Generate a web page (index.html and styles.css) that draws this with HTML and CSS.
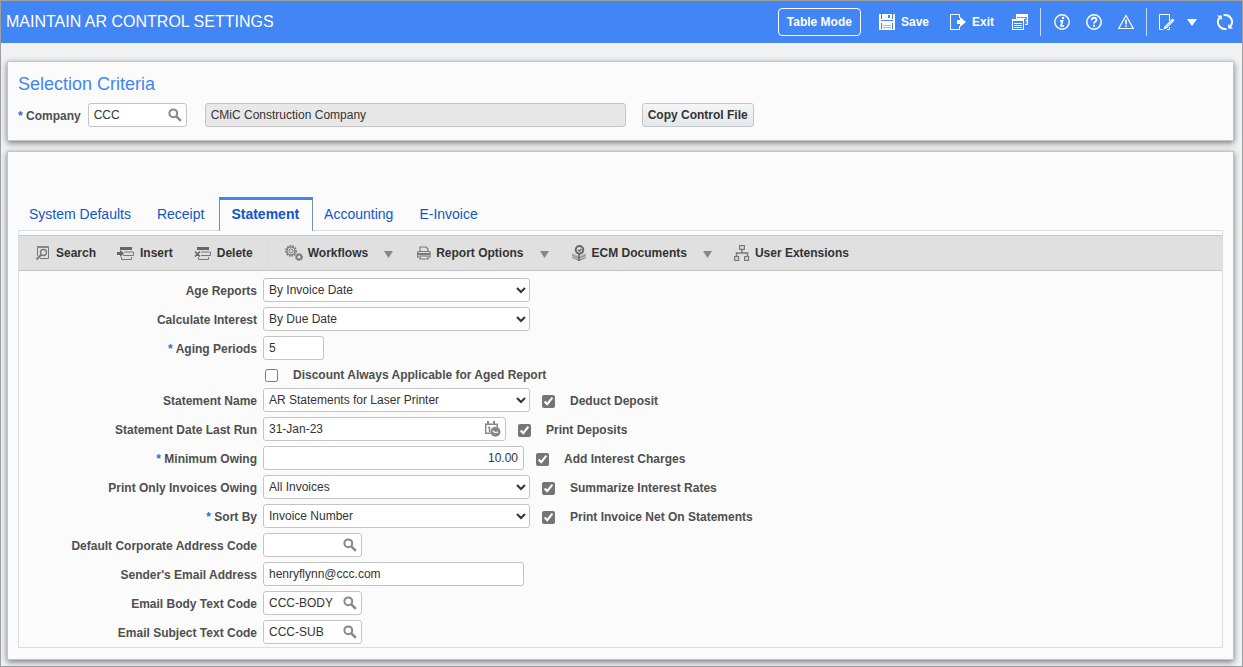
FILE: index.html
```html
<!DOCTYPE html>
<html lang="en">
<head>
<meta charset="utf-8">
<title>Maintain AR Control Settings</title>
<link rel="stylesheet" href="styles.css">
</head>
<body>
<svg class="defs" width="0" height="0" aria-hidden="true">
  <symbol id="lens" viewBox="0 0 14 14"><circle cx="5.3" cy="5.3" r="3.9" fill="none" stroke="#85898c" stroke-width="2"/><path d="M8.400 8.400 12.800 12.800" stroke="#85898c" stroke-width="2.600"/></symbol>
  <symbol id="down" viewBox="0 0 10 7"><path d="M0 0H10L5 7Z" fill="currentColor"/></symbol>
</svg>
<div class="app">
  <header class="topbar">
    <h1 class="title">MAINTAIN AR CONTROL SETTINGS</h1>
    <button class="mode">Table Mode</button>
    <button class="action save"><svg width="16" height="16" viewBox="0 0 16 16"><path fill="#fff" d="M0 0h16v16H0z"/><path fill="#4285f4" d="M2 0h1v5H2zM13 0h1v5h-1zM9 1h2v3H9zM2 6h12v1H2zM2 9h12v6H2z"/><path fill="#fff" d="M3 9h10v6H3z"/><path fill="#8db5fa" d="M4 11h8v1H4zM4 13h8v1H4z"/></svg>Save</button>
    <button class="action exit"><svg width="16" height="16" viewBox="0 0 16 16"><path d="M9.500 4V.5H.5v15h9V12" fill="none" stroke="#fff"/><path fill="#fff" d="M7 6h3V3l6 5-6 5v-3H7z"/></svg>Exit</button>
    <button class="action forms" aria-label="Forms"><svg width="16" height="16" viewBox="0 0 16 16"><path d="M4 0h12v11h-3V5H4z" fill="#fff"/><path d="M5 3h10v7h-2V4H5z" fill="#6fa2f7"/><path d="M0 5h12v11H0z" fill="#fff"/><path d="M1 7h10v8H1z" fill="#4285f4"/><path d="M2 9.500h8M2 11.500h8M2 13.500h8M14 6.500h1" stroke="#fff"/></svg></button>
    <span class="rule"></span>
    <button class="action info" aria-label="Information"><svg width="16" height="16" viewBox="0 0 16 16"><circle cx="8" cy="8" r="7.200" fill="none" stroke="#fff" stroke-width="1.400"/><circle cx="9" cy="4" r="1.300" fill="#fff"/><path d="M6 6.800h2.500L7 11.800h3" fill="none" stroke="#fff" stroke-width="1.700"/></svg></button>
    <button class="action" aria-label="Help"><svg width="16" height="16" viewBox="0 0 16 16"><circle cx="8" cy="8" r="7.200" fill="none" stroke="#fff" stroke-width="1.500"/><path d="M5.600 6.200C5.700 2.900 10.500 3 10.400 6 10.300 7.700 8 7.600 8 9.600" fill="none" stroke="#fff" stroke-width="1.800"/><path d="M7 10.800h2v2H7z" fill="#fff"/></svg></button>
    <button class="action" aria-label="Warnings"><svg width="16" height="16" viewBox="0 0 16 16"><path d="M8 1.500 15.300 14.500H.7Z" fill="none" stroke="#fff" stroke-width="1.200"/><path d="M8 5.500V10.500M8 11.500V13" stroke="#fff" stroke-width="1.600"/></svg></button>
    <span class="rule"></span>
    <button class="action edit" aria-label="Edit page"><svg width="16" height="16" viewBox="0 0 16 16"><path d="M10.500 7V.5H.5v15H4M10.500 13v2.500H8" fill="none" stroke="#fff"/><path d="M4.500 15.500 5.500 12.500 13.500 4.500l2 2-8 8z" fill="#fff"/><path d="M7 13 13 7.300" stroke="#4285f4" stroke-width=".5"/></svg></button>
    <button class="action more" aria-label="More"><svg width="10" height="7"><use href="#down"/></svg></button>
    <button class="action refresh" aria-label="Refresh"><svg width="16" height="16" viewBox="0 0 16 16"><path d="M6.500 1.200A6.900 6.900 0 0 1 13.500 12.200M9.500 14.800A6.900 6.900 0 0 1 2.500 3.800" fill="none" stroke="#fff" stroke-width="1.900"/><path d="M0 1.500h4.800V6zM16 14.500h-4.800V10z" fill="#fff"/></svg></button>
  </header>

  <main class="content">
    <section class="panel criteria">
      <h2 class="heading">Selection Criteria</h2>
      <div class="criteria-row">
        <label class="label company" for="company"><span class="star">*</span> Company</label>
        <div class="box lookup"><input id="company" value="CCC"><button aria-label="Find company"><svg width="14" height="14"><use href="#lens"/></svg></button></div>
        <input class="box company-name" aria-label="Company name" value="CMiC Construction Company" readonly>
        <button class="copy">Copy Control File</button>
      </div>
    </section>

    <section class="panel settings">
      <nav class="tabs">
        <a class="tab" href="#defaults">System Defaults</a>
        <a class="tab" href="#receipt">Receipt</a>
        <a class="tab current" href="#statement">Statement</a>
        <a class="tab" href="#accounting">Accounting</a>
        <a class="tab" href="#einvoice">E-Invoice</a>
      </nav>
      <div class="sheet">
        <div class="toolbar">
          <div class="group">
            <button class="tool"><svg width="18" height="16" viewBox="0 0 18 16"><g fill="none" stroke="#77797a"><path d="M4.500 11V1.500h11v12H7"/><path d="M4 2h12" stroke-width="2" stroke="#888"/><circle cx="10.500" cy="7.500" r="3" stroke-width="1.400"/><path d="M8.500 9.500 3.500 14.500" stroke-width="2"/></g></svg>Search</button>
            <button class="tool"><svg width="18" height="16" viewBox="0 0 18 16"><path d="M3 2h12v3H3zM0 7h3V5l4 3.500L3 12v-2H0z" fill="#666"/><path d="M7 7h9.500v3.500H6M4.500 12v2.500h10V12" fill="none" stroke="#77797a"/></svg>Insert</button>
            <button class="tool"><svg width="18" height="16" viewBox="0 0 18 16"><path d="M3 2h12v3H3z" fill="#666"/><path d="M1 6.500 6 11.500M6 6.500 1 11.500" stroke="#666" stroke-width="1.500"/><path d="M7 7h9.500v3.500H7M4.500 12v2.500h10V12" fill="none" stroke="#77797a"/></svg>Delete</button>
          </div>
          <span class="divider"></span>
          <div class="group menus">
            <button class="tool"><svg width="18" height="16" viewBox="0 0 18 16"><g fill="none" stroke="#77797a"><circle cx="6" cy="6" r="5" stroke-width="1.800" stroke-dasharray="1.700 1"/><circle cx="6" cy="6" r="4"/><circle cx="6" cy="6" r="2"/><circle cx="14" cy="12" r="3.300" stroke-width="1.400" stroke-dasharray="1.300 .8"/><circle cx="14" cy="12" r="2.300" stroke-width="1.500"/></g></svg>Workflows<svg class="arrow" width="9" height="7" viewBox="0 0 9 7"><path d="M0 0H9L4.500 7Z" fill="currentColor"/></svg></button>
            <button class="tool"><svg width="18" height="16" viewBox="0 0 18 16"><g fill="none" stroke="#77797a" stroke-width="1.200"><path d="M7 6V2h6l2 2v2M6 12H4.600V7.500q0-1 1-1h10.500q1 0 1 1V12H16M7 11h8v3H7z"/><path d="M5 9h12" stroke-width="2"/></g></svg>Report Options<svg class="arrow" width="9" height="7" viewBox="0 0 9 7"><path d="M0 0H9L4.500 7Z" fill="currentColor"/></svg></button>
            <button class="tool"><svg width="18" height="16" viewBox="0 0 18 16"><path d="M3 8 10 11 17 8v4l-7 4-7-4z" fill="#bbb"/><path d="M3 10 10 13 17 10M3 12.500l7 3 7-3" fill="none" stroke="#8a8c8d"/><circle cx="10.500" cy="4.800" r="3.800" fill="#ddd" stroke="#666" stroke-width="2"/><path d="M9 5l1.500 1 2-2M10 9v7" fill="none" stroke="#666" stroke-width="1.500"/></svg>ECM Documents<svg class="arrow" width="9" height="7" viewBox="0 0 9 7"><path d="M0 0H9L4.500 7Z" fill="currentColor"/></svg></button>
            <button class="tool"><svg width="18" height="16" viewBox="0 0 18 16"><g fill="none" stroke="#77797a" stroke-width="1.200"><path d="M7.600.6h4.800v3.800H7.600zM2.600 11.600h4v3.800h-4zM12.600 11.600h4v3.800h-4z"/><path d="M10 4.500v3.500M4.500 11V8h11v3" stroke-width="1.500"/></g></svg>User Extensions</button>
          </div>
        </div>

        <form class="form">
          <div class="row"><label class="label" for="age">Age Reports</label><select class="box wide" id="age"><option>By Invoice Date</option></select></div>
          <div class="row"><label class="label" for="interest">Calculate Interest</label><select class="box wide" id="interest"><option>By Due Date</option></select></div>
          <div class="row"><label class="label" for="periods"><span class="star">*</span> Aging Periods</label><input class="box short" id="periods" value="5"></div>
          <div class="row tick-row"><label class="tick"><input type="checkbox">Discount Always Applicable for Aged Report</label></div>
          <div class="row"><label class="label" for="name">Statement Name</label><select class="box wide" id="name"><option>AR Statements for Laser Printer</option></select><label class="tick"><input type="checkbox" checked>Deduct Deposit</label></div>
          <div class="row"><label class="label" for="date">Statement Date Last Run</label><div class="box date"><input id="date" value="31-Jan-23"><button type="button" aria-label="Pick date"><svg width="17" height="16" viewBox="0 0 17 16"><path d="M1.700 3v9.300h5M1 3.200h12.300V6" fill="none" stroke="#85898c" stroke-width="1.500"/><path d="M3 0h2v4H3zM9 0h2v4H9z" fill="#85898c"/><path d="M4 6.500h1.500V11" fill="none" stroke="#85898c" stroke-width="1.500"/><circle cx="11.500" cy="10.700" r="5" fill="#85898c"/><path d="M8.700 10l2.500 1.500 3-.5" fill="none" stroke="#fff" stroke-width="1.200"/></svg></button></div><label class="tick"><input type="checkbox" checked>Print Deposits</label></div>
          <div class="row"><label class="label" for="minimum"><span class="star">*</span> Minimum Owing</label><input class="box medium amount" id="minimum" value="10.00"><label class="tick"><input type="checkbox" checked>Add Interest Charges</label></div>
          <div class="row"><label class="label" for="owing">Print Only Invoices Owing</label><select class="box wide" id="owing"><option>All Invoices</option></select><label class="tick"><input type="checkbox" checked>Summarize Interest Rates</label></div>
          <div class="row"><label class="label" for="sort"><span class="star">*</span> Sort By</label><select class="box wide" id="sort"><option>Invoice Number</option></select><label class="tick"><input type="checkbox" checked>Print Invoice Net On Statements</label></div>
          <div class="row"><label class="label" for="address">Default Corporate Address Code</label><div class="box lookup"><input id="address"><button type="button" aria-label="Find address code"><svg width="14" height="14"><use href="#lens"/></svg></button></div></div>
          <div class="row"><label class="label" for="email">Sender's Email Address</label><input class="box medium" id="email" value="henryflynn@ccc.com"></div>
          <div class="row"><label class="label" for="body">Email Body Text Code</label><div class="box lookup"><input id="body" value="CCC-BODY"><button type="button" aria-label="Find body text"><svg width="14" height="14"><use href="#lens"/></svg></button></div></div>
          <div class="row"><label class="label" for="subject">Email Subject Text Code</label><div class="box lookup"><input id="subject" value="CCC-SUB"><button type="button" aria-label="Find subject text"><svg width="14" height="14"><use href="#lens"/></svg></button></div></div>
        </form>
      </div>
    </section>
  </main>
</div>
</body>
</html>
```

FILE: styles.css
```css
* { box-sizing: border-box; }
body {
  margin: 0;
  font: 12px/16px "Liberation Sans", Arial, sans-serif;
  color: #333;
}
button, input, select { font: inherit; color: inherit; margin: 0; }
button { border: 0; padding: 0; background: none; cursor: pointer; }
svg { display: block; flex: none; }
.defs { position: absolute; }

.app {
  min-height: 100vh;
  border: 1px solid #a0a0a0;
  background: #f1f2f4;
}

.topbar {
  display: flex;
  align-items: center;
  height: 42px;
  padding: 0 9px 0 5px;
  background: #4285f4;
  color: #fff;
  font-weight: bold;
}
.title {
  flex: 1;
  margin: 0;
  font-size: 16px;
  font-weight: normal;
  line-height: 20px;
}
.mode {
  height: 28px;
  padding: 0 8px;
  border: 1px solid #fff;
  border-radius: 4px;
}
.action {
  display: flex;
  align-items: center;
  gap: 6px;
  margin-left: 16px;
}
.save, .forms { margin-left: 18px; }
.exit { margin-left: 21px; }
.rule {
  width: 1px;
  height: 28px;
  margin-left: 12px;
  background: #c5dafc;
}
.info { margin-left: 13px; }
.edit, .more { margin-left: 12px; }
.refresh { margin-left: 20px; }

.content {
  display: flex;
  flex-direction: column;
  gap: 10px;
  padding: 18px 8px 6px 6px;
}
.panel {
  border: 1px solid #c4c4c6;
  background: #fbfbfb;
  box-shadow: 0 2px 6px rgba(0, 0, 0, .5);
}
.criteria { padding: 11px 10px 13px; }
.heading {
  margin: 0 0 8px;
  font-size: 18px;
  font-weight: normal;
  line-height: 22px;
  color: #4285f4;
}
.criteria-row { display: flex; align-items: center; }
.company { margin-right: 7px; }
.company-name { flex: 0 1 421px; margin: 0 16px 0 18px; }
.copy {
  height: 24px;
  padding: 0 5px;
  border: 1px solid #c4c8cc;
  border-radius: 3px;
  background: linear-gradient(#f3f5f6, #e4e8eb);
  font-weight: bold;
}

.label, .tick { font-weight: bold; color: #4f4f4f; }
.label { padding-top: 2px; }
.star { color: #2b6fd0; }

.box {
  height: 24px;
  padding: 0 5px 1px;
  border: 1px solid #c4c4c4;
  border-radius: 3px;
  background: #fff;
}
.box:read-only:is(input) { background: #e8e8e8; }
.wide { width: 267px; padding: 0 0 1px 1px; }
.medium { width: 261px; }
.short { width: 61px; }
.amount { text-align: right; }
.lookup, .date { display: flex; align-items: center; }
.lookup { width: 99px; }
.date { width: 243px; }
.box > input {
  flex: 1;
  min-width: 0;
  padding: 0;
  border: 0;
  background: none;
}
.box > button { margin-right: -1px; }

.settings { padding: 45px 10px 11px; }
.tabs {
  display: flex;
  height: 33px;
  font-size: 14px;
}
.tab {
  padding: 6px 13px 0 11px;
  border-top: 3px solid transparent;
  color: #1155cc;
  text-decoration: none;
}
.tab + .tab { padding-left: 13px; }
.tabs .current {
  position: relative;
  height: 34px;
  margin: 0 -2px 0 2px;
  padding-left: 11px;
  border: 1px solid #7890a8;
  border-top: 3px solid #4285f4;
  border-bottom: 0;
  background: #fcfcfc;
  font-weight: bold;
}
.sheet { border: 1px solid #d5dfe9; padding: 4px 0 3px; }
.toolbar {
  display: flex;
  align-items: center;
  height: 36px;
  padding-left: 14px;
  border: 1px solid #c6c6c6;
  border-width: 1px 0;
  background: #e0e0e0;
}
.group { display: flex; gap: 21px; }
.menus { gap: 20px; }
.divider {
  width: 1px;
  height: 28px;
  margin: 0 15px 0 16px;
  background: #d8dde2;
}
.tool {
  display: flex;
  align-items: center;
  gap: 5px;
  font-weight: bold;
}
.arrow { margin: 2px 0 0 11px; color: #85898c; }

.form {
  display: flex;
  flex-direction: column;
  gap: 5px;
  padding-top: 7px;
}
.row { display: flex; align-items: center; min-height: 24px; }
.row > .label { width: 238px; margin-right: 6px; text-align: right; }
.tick {
  display: flex;
  align-items: center;
  gap: 15px;
  margin-left: 12px;
  padding-top: 2px;
}
.tick input { width: 13px; height: 13px; margin: 0; accent-color: #757575; }
.tick-row { min-height: 18px; padding-left: 234px; }
```
